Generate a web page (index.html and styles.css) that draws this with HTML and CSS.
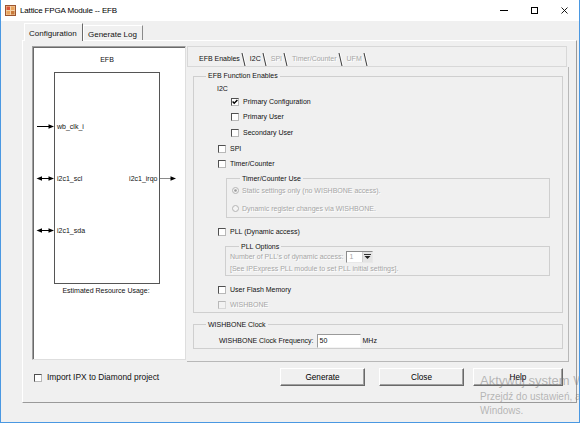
FILE: index.html
```html
<!DOCTYPE html>
<html>
<head>
<meta charset="utf-8">
<title>Lattice FPGA Module -- EFB</title>
<link rel="stylesheet" href="styles.css">
</head>
<body>
<div class="window">
  <div class="titlebar">
    <svg class="appicon" width="11" height="11" viewBox="0 0 11 11">
      <rect x="0.5" y="0.5" width="10" height="10" fill="#f3d2a8" stroke="#9c5530"/>
      <rect x="1.5" y="1.5" width="3.5" height="3.5" fill="#d9553a"/>
      <rect x="6" y="1.5" width="3.5" height="3.5" fill="#e9a45e"/>
      <rect x="1.5" y="6" width="3.5" height="3.5" fill="#e9a45e"/>
      <rect x="6" y="6" width="3.5" height="3.5" fill="#c97a3c"/>
    </svg>
    <span class="title">Lattice FPGA Module -- EFB</span>
    <div class="controls">
      <span class="ctl"><svg width="8" height="1" viewBox="0 0 8 1"><rect width="8" height="1" fill="#000"/></svg></span>
      <span class="ctl"><svg width="7" height="7" viewBox="0 0 7 7"><rect x="0.5" y="0.5" width="6" height="6" fill="none" stroke="#000"/></svg></span>
      <span class="ctl"><svg width="7" height="7" viewBox="0 0 7 7"><path d="M0.5 0.5 L6.5 6.5 M6.5 0.5 L0.5 6.5" stroke="#000" stroke-width="0.9"/></svg></span>
    </div>
  </div>

  <div class="tabstrip">
    <div class="otab selected">Configuration</div>
    <div class="otab">Generate Log</div>
  </div>

  <div class="panel">
    <div class="panel-main">
      <div class="diagram">
        <svg class="diag" width="152" height="312" viewBox="0 0 152 312">
          <text x="74" y="15" text-anchor="middle">EFB</text>
          <rect x="21.5" y="25.5" width="105" height="211" fill="none" stroke="#555"/>
          <line x1="4" y1="79.5" x2="17" y2="79.5" stroke="#000"/>
          <path d="M21 79.5 L15.5 77.3 L15.5 81.7 Z" fill="#000"/>
          <text x="24" y="82">wb_clk_i</text>

          <line x1="8" y1="131.5" x2="17" y2="131.5" stroke="#000"/>
          <path d="M21 131.5 L15.5 129.3 L15.5 133.7 Z" fill="#000"/>
          <path d="M3.5 131.5 L9 129.3 L9 133.7 Z" fill="#000"/>
          <text x="24" y="134">i2c1_scl</text>

          <line x1="8" y1="183.5" x2="17" y2="183.5" stroke="#000"/>
          <path d="M21 183.5 L15.5 181.3 L15.5 185.7 Z" fill="#000"/>
          <path d="M3.5 183.5 L9 181.3 L9 185.7 Z" fill="#000"/>
          <text x="24" y="186">i2c1_sda</text>

          <text x="124.5" y="134" text-anchor="end">i2c1_irqo</text>
          <line x1="127" y1="131.5" x2="139" y2="131.5" stroke="#8a8a8a"/>
          <path d="M143 131.5 L137.5 129.3 L137.5 133.7 Z" fill="#000"/>

          <text x="73" y="246" text-anchor="middle">Estimated Resource Usage:</text>
        </svg>
      </div>

      <div class="itabs">
        <div class="itabhead">
          <span class="itab">EFB Enables</span><span class="isep"></span>
          <span class="itab">I2C</span><span class="isep"></span>
          <span class="itab off">SPI</span><span class="isep"></span>
          <span class="itab off">Timer/Counter</span><span class="isep"></span>
          <span class="itab off">UFM</span><span class="isep"></span>
        </div>
        <div class="itabpage">
          <fieldset class="group g-main">
            <legend>EFB Function Enables</legend>
            <div class="row r-head">I2C</div>
            <div class="row ind2"><span class="cb"><svg width="6" height="6" viewBox="0 0 6 6"><path d="M0.6 2.6 L2.2 4.3 L5.4 0.9" stroke="#000" stroke-width="1.4" fill="none"/></svg></span><span>Primary Configuration</span></div>
            <div class="row ind2"><span class="cb"></span><span>Primary User</span></div>
            <div class="row ind2"><span class="cb"></span><span>Secondary User</span></div>
            <div class="row ind1"><span class="cb"></span><span>SPI</span></div>
            <div class="row ind1"><span class="cb"></span><span>Timer/Counter</span></div>

            <fieldset class="group g-sub g-timer">
              <legend>Timer/Counter Use</legend>
              <div class="row rrow"><svg class="radio" width="7" height="7" viewBox="0 0 7 7"><circle cx="3.5" cy="3.5" r="3" fill="#f4f4f4" stroke="#b4b4b4"/><circle cx="3.5" cy="3.5" r="1.3" fill="#9a9a9a"/></svg><span class="off">Static settings only (no WISHBONE access).</span></div>
              <div class="row rrow"><svg class="radio" width="7" height="7" viewBox="0 0 7 7"><circle cx="3.5" cy="3.5" r="3" fill="#f4f4f4" stroke="#b4b4b4"/></svg><span class="off">Dynamic register changes via WISHBONE.</span></div>
            </fieldset>

            <div class="row ind1 r-gap"><span class="cb"></span><span>PLL (Dynamic access)</span></div>

            <fieldset class="group g-sub g-pll">
              <legend>PLL Options</legend>
              <div class="row r-num"><span class="off">Number of PLL's of dynamic access:</span>
                <span class="combo"><span class="combo-val">1</span><span class="combo-btn"><svg width="7" height="6" viewBox="0 0 7 6"><rect x="0" y="0" width="7" height="1" fill="#333"/><path d="M0.5 2 L6.5 2 L3.5 5 Z" fill="#222"/></svg></span></span>
              </div>
              <div class="row r-see"><span class="off">[See IPExpress PLL module to set PLL initial settings].</span></div>
            </fieldset>

            <div class="row ind1 r-gap"><span class="cb"></span><span>User Flash Memory</span></div>
            <div class="row ind1 r-wb"><span class="cb dis"></span><span class="off">WISHBONE</span></div>
          </fieldset>

          <fieldset class="group g-wb">
            <legend>WISHBONE Clock</legend>
            <div class="row r-freq"><span>WISHBONE Clock Frequency:</span><span class="textbox">50</span><span>MHz</span></div>
          </fieldset>
        </div>
      </div>
    </div>

    <div class="bottom">
      <div class="import"><span class="cb"></span><span>Import IPX to Diamond project</span></div>
      <div class="buttons">
        <button class="btn b-gen">Generate</button>
        <button class="btn b-close">Close</button>
        <button class="btn b-help">Help</button>
      </div>
    </div>
  </div>

  <div class="watermark">
    <div class="wm1">Aktywuj system Windows</div>
    <div class="wm2">Przejdź do ustawień, aby aktywować system</div>
    <div class="wm3">Windows.</div>
  </div>
</div>
</body>
</html>
```

FILE: styles.css
```css
* { box-sizing: border-box; }
html, body { margin: 0; padding: 0; }
body {
  width: 580px;
  height: 423px;
  overflow: hidden;
  background: #f0f0f0;
  font-family: "Liberation Sans", Arial, sans-serif;
  color: #111;
}
.window {
  position: relative;
  width: 580px;
  height: 423px;
  border: 1px solid #4a98e2;
  border-top: 0;
  background: #f0f0f0;
  overflow: hidden;
}

/* title bar */
.titlebar {
  height: 21px;
  background: #fff;
  display: flex;
  align-items: center;
}
.appicon { margin-left: 4px; flex: none; }
.title {
  margin-left: 4px;
  font-size: 8px;
  letter-spacing: -0.15px;
  line-height: 10px;
  color: #000;
}
.controls { margin-left: auto; display: flex; height: 21px; }
.ctl {
  width: 30px;
  height: 21px;
  display: flex;
  align-items: center;
  justify-content: center;
}

/* outer tabs */
.tabstrip {
  height: 19px;
  padding-left: 23px;
  display: flex;
  align-items: flex-end;
}
.otab {
  font-size: 8px;
  line-height: 11px;
  height: 15px;
  width: 60px;
  padding: 3px 0 0 4px;
  border: 1px solid #fff;
  border-bottom: 0;
  border-right-color: #8a8a8a;
  background: #f0f0f0;
}
.otab.selected {
  height: 18px;
  width: 59px;
  margin-bottom: -1px;
  position: relative;
  z-index: 2;
  padding-top: 4px;
  border-right-color: #696969;
}
.panel {
  margin-left: 21px;
  width: 555px;
  height: 363px;
  border: 1px solid;
  border-color: #fff #9a9a9a #9a9a9a #fff;
  padding: 5px 0 0 9px;
  position: relative;
  z-index: 1;
}
.panel-main {
  display: flex;
  align-items: flex-start;
  gap: 1px;
}

/* diagram */
.diagram {
  width: 154px;
  height: 314px;
  background: #fff;
  border: 1px solid;
  border-color: #a0a0a0 #dedede #dedede #a0a0a0;
  box-shadow: inset 1px 1px 0 #6a6a6a;
}
.diag { display: block; }
.diag text { font-family: "Liberation Sans", Arial, sans-serif; font-size: 7px; fill: #111; }

/* inner tabs */
.itabs { width: 382px; height: 316px; }
.itabhead {
  height: 21px;
  margin-right: 2px;
  border: 1px solid #d8d8d8;
  display: flex;
  align-items: flex-end;
  padding-left: 11px;
}
.itab {
  font-size: 7px;
  line-height: 10px;
  margin-bottom: 2px;
  white-space: nowrap;
}
.isep {
  width: 2px;
  height: 13px;
  border-left: 1px solid #3a3a3a;
  border-right: 1px solid #fff;
  transform: skewX(13deg);
  margin: 0 5px 0 3px;
}
.off { color: #a6a6a6; text-shadow: 1px 1px 0 #fff; }

.itabpage {
  height: 295px;
  padding: 4px 0 0 6px;
  border-right: 1px solid #b8b8b8;
  border-bottom: 1px solid #b8b8b8;
}

/* group boxes */
.group {
  margin: 0;
  padding: 0;
  min-width: 0;
  border: 1px solid #cfcfcf;
  font-size: 7px;
}
.group > legend {
  margin-left: 12px;
  padding: 0 2px;
  font-size: 7px;
  line-height: 10px;
}
.g-main { width: 370px; padding-bottom: 1px; }
.g-wb { width: 370px; margin-top: 7px; }

.row {
  display: flex;
  align-items: center;
  height: 15.6px;
  font-size: 7px;
  line-height: 10px;
  white-space: nowrap;
}
.r-head { height: 10px; margin-top: 3px; padding-left: 23px; }
.ind2 { padding-left: 37px; }
.ind1 { padding-left: 24px; }
.r-gap { margin-top: 6px; height: 16px; }
.r-wb { height: 12px; margin-top: 1px; }

.cb {
  width: 8px;
  height: 8px;
  flex: none;
  margin-right: 4px;
  background: #fff;
  border: 1px solid;
  border-color: #505050 #b8b8b8 #b8b8b8 #505050;
  display: flex;
  align-items: center;
  justify-content: center;
}
.cb.dis { background: #f2f2f2; border-color: #b8b8b8 #d8d8d8 #d8d8d8 #b8b8b8; }

.g-sub { margin: 2px 12px 0 32px; padding-bottom: 1px; }
.g-sub > legend { margin-left: 13px; }
.g-timer .rrow { height: 14px; padding-left: 5px; }
.g-timer .rrow + .rrow { margin-top: 4px; }
.radio { flex: none; margin-right: 3px; display: block; }

.g-pll { margin-left: 31px; padding-bottom: 0; }
.g-pll .row { padding-left: 4px; }
.r-num { height: 11px; }
.r-see { height: 12px; }

.combo {
  margin-left: 3px;
  width: 27px;
  height: 12px;
  display: flex;
  border: 1px solid;
  border-color: #8c8c8c #e8e8e8 #e8e8e8 #8c8c8c;
  background: #fff;
}
.combo-val { flex: 1; color: #a6a6a6; padding-left: 2px; line-height: 10px; }
.combo-btn {
  width: 10px;
  background: #e4e4e4;
  border-left: 1px solid #cfcfcf;
  display: flex;
  align-items: center;
  justify-content: center;
}

.r-freq { height: 14px; margin: 4px 0 0; padding-left: 25px; }
.textbox {
  width: 44px;
  height: 14px;
  margin: 0 2px 0 3px;
  background: #fff;
  border: 1px solid;
  border-color: #9a9a9a #f4f4f4 #f4f4f4 #9a9a9a;
  padding-left: 2px;
  line-height: 12px;
}

/* bottom row */
.bottom {
  margin-top: 6px;
  height: 18px;
  display: flex;
  align-items: center;
}
.import {
  flex: 1;
  display: flex;
  align-items: center;
  padding-left: 2px;
  font-size: 8.4px;
  line-height: 11px;
  padding-top: 1px;
}
.import .cb { margin-right: 5px; }
.buttons { display: flex; margin-right: 13px; }
.btn {
  height: 18px;
  margin: 0;
  padding: 0;
  font-family: "Liberation Sans", Arial, sans-serif;
  font-size: 8.2px;
  color: #000;
  background: #f0f0f0;
  border: 1px solid;
  border-color: #fff #696969 #696969 #fff;
  box-shadow: inset -1px -1px 0 #a0a0a0;
}
.b-gen { width: 85px; }
.b-close { width: 85px; margin-left: 14px; }
.b-help { width: 90px; margin-left: 9px; }

/* activation watermark overlay */
.watermark {
  position: absolute;
  left: 479px;
  top: 373px;
  z-index: 5;
  color: rgba(120, 120, 120, 0.5);
  white-space: nowrap;
  pointer-events: none;
}
.wm1 { font-size: 13px; line-height: 15px; }
.wm2 { font-size: 10px; line-height: 13px; margin-top: 2px; }
.wm3 { font-size: 10px; line-height: 13px; margin-top: 1px; }
```
